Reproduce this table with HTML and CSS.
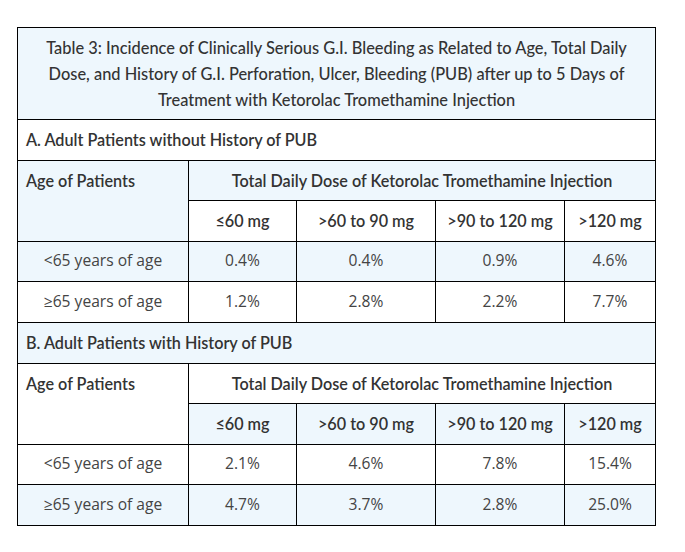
FILE: index.html
```html
<!DOCTYPE html>
<html>
<head>
<meta charset="utf-8">
<link rel="stylesheet" href="styles.css">
</head>
<body>
<div class="page">
<table class="dose-table">
  <colgroup>
    <col class="c1"><col class="c2"><col class="c3"><col class="c4"><col class="c5">
  </colgroup>
  <tbody>
    <tr class="alt caption-row">
      <td colspan="5" class="caption">Table 3: Incidence of Clinically Serious G.I. Bleeding as Related to Age, Total Daily Dose, and History of G.I. Perforation, Ulcer, Bleeding (PUB) after up to 5 Days of Treatment with Ketorolac Tromethamine Injection</td>
    </tr>
    <tr>
      <td colspan="5" class="section">A. Adult Patients without History of PUB</td>
    </tr>
    <tr class="alt">
      <td rowspan="2" class="head age">Age of Patients</td>
      <td colspan="4" class="head center">Total Daily Dose of Ketorolac Tromethamine Injection</td>
    </tr>
    <tr>
      <td class="head center">≤60 mg</td>
      <td class="head center">&gt;60 to 90 mg</td>
      <td class="head center">&gt;90 to 120 mg</td>
      <td class="head center">&gt;120 mg</td>
    </tr>
    <tr class="alt">
      <td class="data">&lt;65 years of age</td>
      <td class="data">0.4%</td>
      <td class="data">0.4%</td>
      <td class="data">0.9%</td>
      <td class="data">4.6%</td>
    </tr>
    <tr>
      <td class="data">≥65 years of age</td>
      <td class="data">1.2%</td>
      <td class="data">2.8%</td>
      <td class="data">2.2%</td>
      <td class="data">7.7%</td>
    </tr>
    <tr class="alt">
      <td colspan="5" class="section">B. Adult Patients with History of PUB</td>
    </tr>
    <tr>
      <td rowspan="2" class="head age">Age of Patients</td>
      <td colspan="4" class="head center">Total Daily Dose of Ketorolac Tromethamine Injection</td>
    </tr>
    <tr class="alt">
      <td class="head center">≤60 mg</td>
      <td class="head center">&gt;60 to 90 mg</td>
      <td class="head center">&gt;90 to 120 mg</td>
      <td class="head center">&gt;120 mg</td>
    </tr>
    <tr>
      <td class="data">&lt;65 years of age</td>
      <td class="data">2.1%</td>
      <td class="data">4.6%</td>
      <td class="data">7.8%</td>
      <td class="data">15.4%</td>
    </tr>
    <tr class="alt">
      <td class="data">≥65 years of age</td>
      <td class="data">4.7%</td>
      <td class="data">3.7%</td>
      <td class="data">2.8%</td>
      <td class="data">25.0%</td>
    </tr>
  </tbody>
</table>
</div>
</body>
</html>
```

FILE: styles.css
```css
html, body {
  margin: 0;
  padding: 0;
  background: #ffffff;
}

.page {
  padding: 27px 0 0 17px;
}

.dose-table {
  border-collapse: collapse;
  table-layout: fixed;
  width: 638px;
  font-family: Lato, "Open Sans", sans-serif;
  color: #333333;
  border: 1px solid #000;
}

.c1 { width: 171px; }
.c2 { width: 108px; }
.c3 { width: 139px; }
.c4 { width: 129px; }
.c5 { width: 91px; }

.dose-table td {
  border: 1px solid #000;
  padding: 0 8px;
  height: 40.6px;
  box-sizing: border-box;
  font-size: 16.2px;
}

.dose-table tr {
  background: #ffffff;
}

.dose-table tr.alt {
  background: #eef7fd;
}

.dose-table td.caption {
  height: auto;
  text-align: center;
  line-height: 26px;
  padding: 7px 12px 6px;
  font-size: 16.4px;
  font-weight: 500;
}

.section {
  font-weight: 600;
  text-align: left;
}

.head {
  font-weight: 600;
}

.dose-table td.age {
  vertical-align: top;
  padding-top: 10px;
}

.center {
  text-align: center;
}

.dose-table td.data {
  text-align: center;
  font-family: "Open Sans", sans-serif;
  font-size: 15.6px;
  color: #444444;
  padding-bottom: 3px;
}
```
